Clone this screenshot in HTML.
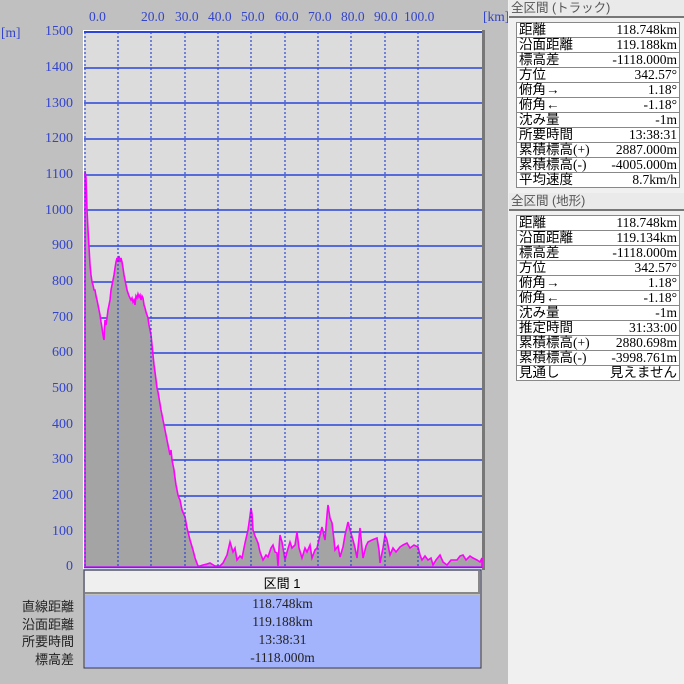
<!DOCTYPE html>
<html><head><meta charset="utf-8"><style>
body{margin:0;width:684px;height:684px;background:#c0c0c0;position:relative;overflow:hidden;font-family:"Liberation Serif","Noto Serif CJK SC","Noto Sans CJK JP",serif;}
.ax{position:absolute;color:#3344cc;font-size:13.5px;font-family:"Liberation Serif",serif;}
.yl{position:absolute;right:611px;width:50px;text-align:right;color:#3344cc;font-size:14px;font-family:"Liberation Serif",serif;}
.rp{position:absolute;left:508px;top:0;width:176px;height:684px;background:#f0f0f0;}
.hd{position:absolute;left:509px;width:173px;height:16px;background:#eaeaea;border-right:2px solid #777;border-bottom:2px solid #777;font-size:12.5px;line-height:16px;color:#555;font-family:"Liberation Sans","Noto Sans CJK JP",sans-serif;padding-left:2px;box-sizing:content-box}
table.t{position:absolute;left:516px;width:164px;border-collapse:collapse;background:#fff;font-size:13.5px;font-family:"Liberation Serif","Noto Sans CJK JP",serif;}
table.t td{border:1px solid #888;height:14px;line-height:14px;padding:0 2px;white-space:nowrap}
table.t td:last-child{text-align:right;border-left:none}
table.t td:first-child{border-right:none}
.bl{position:absolute;right:610px;width:80px;text-align:right;font-size:13px;font-family:"Liberation Sans","Noto Sans CJK JP",sans-serif;color:#222}
</style></head><body>
<div class="ax" style="left:89px;top:9px">0.0</div>
<div class="ax" style="left:141px;top:9px">20.0</div>
<div class="ax" style="left:175px;top:9px">30.0</div>
<div class="ax" style="left:208px;top:9px">40.0</div>
<div class="ax" style="left:241px;top:9px">50.0</div>
<div class="ax" style="left:275px;top:9px">60.0</div>
<div class="ax" style="left:308px;top:9px">70.0</div>
<div class="ax" style="left:341px;top:9px">80.0</div>
<div class="ax" style="left:374px;top:9px">90.0</div>
<div class="ax" style="left:404px;top:9px">100.0</div>
<div class="ax" style="left:483px;top:9px">[km]</div>
<div class="ax" style="left:1px;top:25px">[m]</div>
<div class="yl" style="top:24px">1500</div><div class="yl" style="top:60px">1400</div><div class="yl" style="top:96px">1300</div><div class="yl" style="top:131px">1200</div><div class="yl" style="top:167px">1100</div><div class="yl" style="top:203px">1000</div><div class="yl" style="top:238px">900</div><div class="yl" style="top:274px">800</div><div class="yl" style="top:310px">700</div><div class="yl" style="top:345px">600</div><div class="yl" style="top:381px">500</div><div class="yl" style="top:417px">400</div><div class="yl" style="top:452px">300</div><div class="yl" style="top:488px">200</div><div class="yl" style="top:524px">100</div><div class="yl" style="top:559px">0</div>
<svg style="position:absolute;left:0;top:0" width="508" height="684">
<rect x="83" y="30" width="400" height="539" fill="#fff"/>
<rect x="482" y="30" width="3" height="540" fill="#777"/>
<rect x="84" y="31" width="398" height="537" fill="#dcdcdc"/>
<g stroke="#2a45d8" stroke-width="1.5">
<line x1="84" x2="482" y1="32" y2="32" stroke-width="2"/><line x1="84" x2="482" y1="68" y2="68"/><line x1="84" x2="482" y1="103" y2="103"/><line x1="84" x2="482" y1="139" y2="139"/><line x1="84" x2="482" y1="175" y2="175"/><line x1="84" x2="482" y1="210" y2="210"/><line x1="84" x2="482" y1="246" y2="246"/><line x1="84" x2="482" y1="282" y2="282"/><line x1="84" x2="482" y1="318" y2="318"/><line x1="84" x2="482" y1="353" y2="353"/><line x1="84" x2="482" y1="389" y2="389"/><line x1="84" x2="482" y1="425" y2="425"/><line x1="84" x2="482" y1="460" y2="460"/><line x1="84" x2="482" y1="496" y2="496"/><line x1="84" x2="482" y1="532" y2="532"/>
</g>
<path fill="#a4a4a4" stroke="#ff00ff" stroke-width="1.6" d="M85,567 L85,171 86,178 87,210 88,230 89,247 90,265 91,275 92,282 93,285 94,290 95,290 96,296 97,300 98,305 99,310 100,315 101,322 102,328 103,335 104,340 105,320 106,325 107,318 108,310 109,305 110,300 111,290 112,285 113,280 114,275 115,268 116,262 117,258 118,262 119,256 120,262 121,258 122,262 123,268 124,275 125,280 126,285 127,290 128,293 129,296 130,298 131,300 132,298 133,302 134,300 135,305 136,296 137,298 138,294 139,297 140,295 141,300 142,296 143,298 144,305 145,308 146,312 147,315 148,318 149,325 150,330 151,335 152,345 153,355 154,365 155,372 156,380 157,388 158,392 159,398 160,404 161,410 162,415 163,420 164,425 165,430 166,435 167,440 168,445 169,450 170,455 171,450 172,460 173,465 174,470 175,478 176,485 177,490 178,495 179,498 180,500 182,510 185,517 187,528 190,540 193,550 195,558 198,566 200,566 203,565 207,564 210,563 215,566 220,566 223,563 227,555 230,542 233,552 235,548 237,560 240,556 242,558 245,543 248,530 250,516 251,508 252,514 253,530 255,536 258,543 260,552 263,560 266,555 268,557 271,548 273,545 275,552 277,553 278,566 279,548 280,535 282,542 285,560 287,552 290,542 292,548 295,545 297,532 299,548 302,558 305,548 307,552 310,545 312,558 315,550 317,548 320,535 322,527 324,536 325,540 327,515 328,505 330,518 332,523 334,540 335,550 338,546 340,557 343,547 345,535 348,522 350,530 353,540 355,548 357,558 359,538 360,528 362,548 363,558 366,546 368,542 372,540 377,538 379,550 380,563 383,548 385,535 387,540 390,555 393,548 396,552 400,547 403,545 407,543 410,548 414,545 418,547 420,555 422,560 425,556 428,560 431,558 433,565 436,560 440,555 443,562 447,565 451,560 457,560 460,556 463,555 466,560 470,556 473,558 477,560 480,562 482,558 482,567 Z"/>
<g stroke="#2a45d8" stroke-width="1.2" stroke-dasharray="2,2">
<line x1="85" x2="85" y1="32" y2="567"/><line x1="118" x2="118" y1="32" y2="567"/><line x1="151" x2="151" y1="32" y2="567"/><line x1="185" x2="185" y1="32" y2="567"/><line x1="218" x2="218" y1="32" y2="567"/><line x1="251" x2="251" y1="32" y2="567"/><line x1="285" x2="285" y1="32" y2="567"/><line x1="318" x2="318" y1="32" y2="567"/><line x1="351" x2="351" y1="32" y2="567"/><line x1="385" x2="385" y1="32" y2="567"/><line x1="418" x2="418" y1="32" y2="567"/>
</g>
<line x1="84" x2="482" y1="567.5" y2="567.5" stroke="#2a45d8" stroke-width="1.5"/>
<rect x="84" y="570" width="397" height="98" fill="none" stroke="#333355" stroke-width="1"/>
<rect x="85" y="571" width="394" height="23" fill="#efefef"/>
<rect x="85" y="592" width="394" height="2" fill="#888"/>
<rect x="478" y="571" width="2" height="23" fill="#888"/>
<rect x="85" y="595" width="395" height="72" fill="#a4b4fc"/>
</svg>
<div style="position:absolute;left:85px;top:573px;width:394px;text-align:center;font-size:13px;font-family:'Liberation Sans','Noto Sans CJK JP',sans-serif">区間 1</div>
<div style="position:absolute;left:85px;top:595px;width:395px;text-align:center;font-size:13.5px;line-height:18px;color:#222">118.748km<br>119.188km<br>13:38:31<br>-1118.000m</div>
<div class="bl" style="top:596px">直線距離</div><div class="bl" style="top:614px">沿面距離</div><div class="bl" style="top:631px">所要時間</div><div class="bl" style="top:649px">標高差</div>
<div class="rp"></div>
<div class="hd" style="top:0">全区間 (トラック)</div>
<table class="t" style="top:22px">
<tr><td>距離</td><td>118.748km</td></tr><tr><td>沿面距離</td><td>119.188km</td></tr><tr><td>標高差</td><td>-1118.000m</td></tr><tr><td>方位</td><td>342.57°</td></tr><tr><td>俯角→</td><td>1.18°</td></tr><tr><td>俯角←</td><td>-1.18°</td></tr><tr><td>沈み量</td><td>-1m</td></tr><tr><td>所要時間</td><td>13:38:31</td></tr><tr><td>累積標高(+)</td><td>2887.000m</td></tr><tr><td>累積標高(-)</td><td>-4005.000m</td></tr><tr><td>平均速度</td><td>8.7km/h</td></tr>
</table>
<div class="hd" style="top:193px">全区間 (地形)</div>
<table class="t" style="top:215px">
<tr><td>距離</td><td>118.748km</td></tr><tr><td>沿面距離</td><td>119.134km</td></tr><tr><td>標高差</td><td>-1118.000m</td></tr><tr><td>方位</td><td>342.57°</td></tr><tr><td>俯角→</td><td>1.18°</td></tr><tr><td>俯角←</td><td>-1.18°</td></tr><tr><td>沈み量</td><td>-1m</td></tr><tr><td>推定時間</td><td>31:33:00</td></tr><tr><td>累積標高(+)</td><td>2880.698m</td></tr><tr><td>累積標高(-)</td><td>-3998.761m</td></tr><tr><td>見通し</td><td>見えません</td></tr>
</table>
</body></html>
